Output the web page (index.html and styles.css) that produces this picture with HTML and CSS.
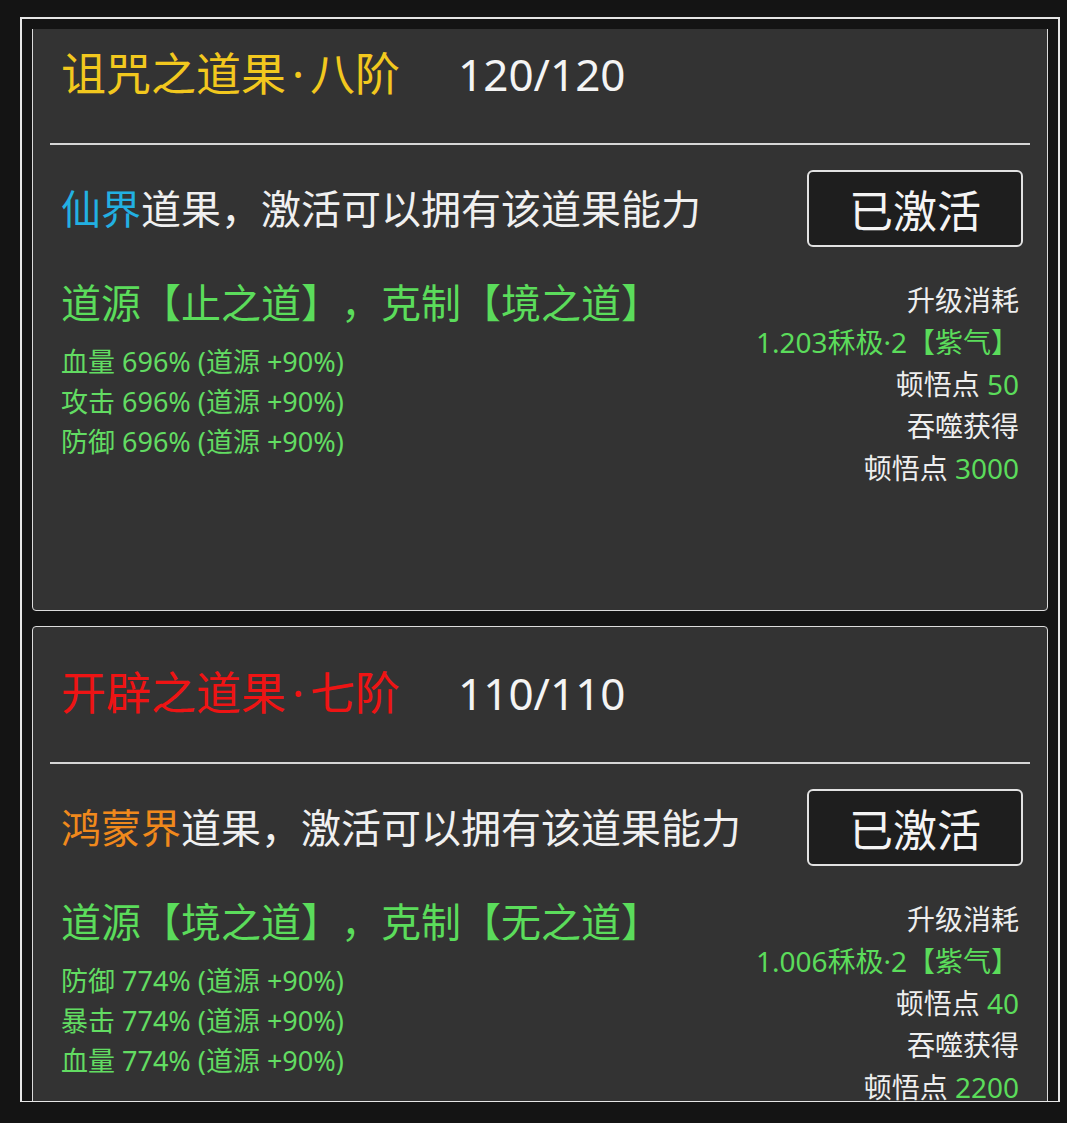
FILE: index.html
```html
<!DOCTYPE html>
<html lang="zh-CN">
  <head>
    <meta charset="UTF-8" />
    <meta name="viewport" content="width=device-width, initial-scale=1.0" />
    <title>道果</title>
    <link rel="stylesheet" href="styles.css">
  </head>
  <body>
    <div class="frame">
      <div class="viewport">
        <div class="list">
          <div class="card">
            <div class="card-head">
              <span class="name yellow">诅咒之道果<span class="dot">·</span>八阶</span>
              <span class="count">120/120</span>
            </div>
            <div class="divider"></div>
            <div class="row-top">
              <p class="desc"><span class="blue">仙界</span>道果，激活可以拥有该道果能力</p>
              <button class="btn">已激活</button>
            </div>
            <div class="row-info">
              <div class="left">
                <p class="source">道源【止之道】，克制【境之道】</p>
                <p class="stat">血量 696% (道源 +90%)</p>
                <p class="stat">攻击 696% (道源 +90%)</p>
                <p class="stat">防御 696% (道源 +90%)</p>
              </div>
              <div class="right">
                <p>升级消耗</p>
                <p class="green">1.203秝极·2【紫气】</p>
                <p>顿悟点 <span class="green">50</span></p>
                <p>吞噬获得</p>
                <p>顿悟点 <span class="green">3000</span></p>
              </div>
            </div>
          </div>

          <div class="card">
            <div class="card-head">
              <span class="name red">开辟之道果<span class="dot">·</span>七阶</span>
              <span class="count">110/110</span>
            </div>
            <div class="divider"></div>
            <div class="row-top">
              <p class="desc"><span class="orange">鸿蒙界</span>道果，激活可以拥有该道果能力</p>
              <button class="btn">已激活</button>
            </div>
            <div class="row-info">
              <div class="left">
                <p class="source">道源【境之道】，克制【无之道】</p>
                <p class="stat">防御 774% (道源 +90%)</p>
                <p class="stat">暴击 774% (道源 +90%)</p>
                <p class="stat">血量 774% (道源 +90%)</p>
              </div>
              <div class="right">
                <p>升级消耗</p>
                <p class="green">1.006秝极·2【紫气】</p>
                <p>顿悟点 <span class="green">40</span></p>
                <p>吞噬获得</p>
                <p>顿悟点 <span class="green">2200</span></p>
              </div>
            </div>
          </div>
        </div>
      </div>
    </div>
  </body>
</html>
```

FILE: styles.css
```css
body {
  margin: 0;
  background: #141414;
  font-family: "Noto Sans", "Noto Sans CJK SC", sans-serif;
  color: #f0f0f0;
  overflow: hidden;
  text-spacing-trim: space-all;
}
p {
  margin: 0;
}
.frame {
  margin: 17px 7px 0 20px;
  border: 2px solid #e6e6e6;
  border-bottom-width: 1px;
  padding: 10px 10px 0 10px;
  box-sizing: border-box;
  height: 1085px;
  display: flex;
  flex-direction: column;
}
.viewport {
  flex: 1;
  overflow: hidden;
}
.list {
  margin-top: -22px;
}
.card {
  height: 604px;
  box-sizing: border-box;
  background: #333333;
  border: 1px solid #dcdcdc;
  border-radius: 4px;
  margin-bottom: 15px;
}
.card-head {
  height: 135px;
  box-sizing: border-box;
  padding: 0 28px 4px;
  display: flex;
  align-items: center;
}
.name {
  font-size: 45px;
  line-height: 60px;
}
.dot {
  margin: 0 6px;
}
.count {
  font-size: 44px;
  line-height: 60px;
  color: #f4f4f4;
  margin-left: 58px;
}
.divider {
  height: 2px;
  margin: 0 17px;
  background: #d6d6d6;
}
.row-top {
  margin-top: 25px;
  padding: 0 24px 0 28px;
  display: flex;
  align-items: center;
  justify-content: space-between;
}
.desc {
  font-size: 40px;
  line-height: 56px;
}
.btn {
  width: 216px;
  height: 77px;
  background: #1e1e1e;
  border: 2px solid #e2e2e2;
  border-radius: 6px;
  color: #f4f4f4;
  font-family: "Noto Sans CJK SC", sans-serif;
  font-size: 44px;
  padding: 0;
}
.row-info {
  padding: 28px 28px 0 28px;
  display: flex;
  justify-content: space-between;
  align-items: flex-start;
}
.source {
  font-size: 40px;
  line-height: 56px;
  color: #5bdc5b;
  margin-bottom: 11px;
}
.stat {
  font-size: 27px;
  line-height: 40px;
  color: #62dc62;
}
.right {
  padding-top: 4px;
  text-align: right;
  font-size: 28px;
  line-height: 42px;
  color: #eeeeee;
}
.green {
  color: #5bdc5b;
}
.yellow {
  color: #f2c81e;
}
.red {
  color: #ee1414;
}
.blue {
  color: #22b0e2;
}
.orange {
  color: #f0891c;
}
```
